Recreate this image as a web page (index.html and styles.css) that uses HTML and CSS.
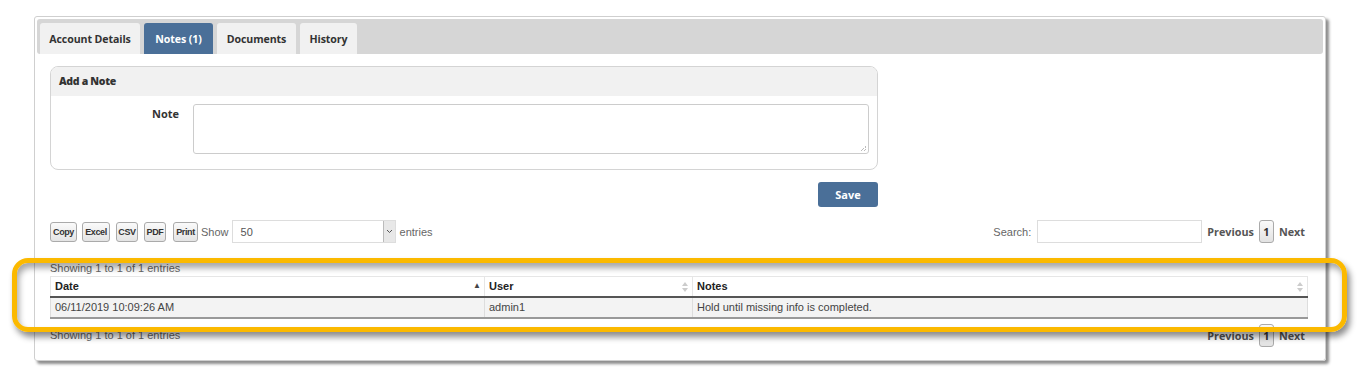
FILE: index.html
```html
<!DOCTYPE html>
<html lang="en">
<head>
  <meta charset="UTF-8" />
  <title>Account Notes</title>
  <link rel="stylesheet" href="styles.css">
</head>
<body>
  <div class="panel">
    <div class="tab-bar">
      <div class="tab w-details">Account Details</div>
      <div class="tab w-notes active">Notes (1)</div>
      <div class="tab w-docs">Documents</div>
      <div class="tab w-history">History</div>
    </div>

    <div class="content">
      <div class="note-box">
        <div class="note-head">Add a Note</div>
        <div class="note-body">
          <label class="note-label">Note</label>
          <div class="note-input"><span class="grip"></span></div>
        </div>
      </div>

      <div class="save-row">
        <button class="save">Save</button>
      </div>

      <div class="toolbar">
        <div class="tools-left">
          <button class="tool w-copy">Copy</button>
          <button class="tool w-excel">Excel</button>
          <button class="tool w-csv">CSV</button>
          <button class="tool w-pdf">PDF</button>
          <button class="tool w-print">Print</button>
          <span class="muted">Show</span>
          <div class="select">
            <span class="select-val">50</span>
            <span class="select-arrow">
              <svg width="7" height="5" viewBox="0 0 7 5"><path d="M1 1 L3.5 3.5 L6 1" fill="none" stroke="#555" stroke-width="1"/></svg>
            </span>
          </div>
          <span class="muted">entries</span>
        </div>
        <div class="tools-right">
          <span class="muted">Search:</span>
          <div class="search"></div>
          <div class="pager">
            <span>Previous</span>
            <span class="page">1</span>
            <span>Next</span>
          </div>
        </div>
      </div>

      <div class="info">Showing 1 to 1 of 1 entries</div>

      <table class="grid">
        <thead>
          <tr>
            <th class="c-date">Date<span class="sort up">&#9650;</span></th>
            <th class="c-user">User<span class="sort both"><svg width="6" height="10" viewBox="0 0 6 10"><path d="M3 0 L6 4 L0 4 Z M3 10 L6 6 L0 6 Z" fill="#ccc"/></svg></span></th>
            <th class="c-notes">Notes<span class="sort both"><svg width="6" height="10" viewBox="0 0 6 10"><path d="M3 0 L6 4 L0 4 Z M3 10 L6 6 L0 6 Z" fill="#ccc"/></svg></span></th>
          </tr>
        </thead>
        <tbody>
          <tr>
            <td>06/11/2019 10:09:26 AM</td>
            <td>admin1</td>
            <td>Hold until missing info is completed.</td>
          </tr>
        </tbody>
      </table>

      <div class="footer-row">
        <div class="info">Showing 1 to 1 of 1 entries</div>
        <div class="pager">
          <span>Previous</span>
          <span class="page">1</span>
          <span>Next</span>
        </div>
      </div>
    </div>
  </div>

  <div class="highlight"></div>
</body>
</html>
```

FILE: styles.css
```css
* {
  box-sizing: border-box;
}

body {
  margin: 0;
  background: #fff;
  font-family: "Liberation Sans", Arial, sans-serif;
  font-size: 11px;
  color: #333;
  position: relative;
  height: 383px;
  overflow: hidden;
}

.panel {
  margin: 16px 0 0 34px;
  width: 1292px;
  height: 345px;
  border: 1px solid #cfcfcf;
  border-radius: 3px;
  padding: 2px;
  box-shadow: 3px 3px 3px rgba(0, 0, 0, 0.45);
}

.tab-bar {
  display: flex;
  gap: 4px;
  height: 35px;
  padding: 4px 0 0 3px;
  background: #d6d6d6;
  border-radius: 3px;
}

.tab {
  display: flex;
  align-items: center;
  justify-content: center;
  height: 31px;
  background: #f1f1f1;
  border-radius: 3px 3px 0 0;
  font-family: "Open Sans", sans-serif;
  font-weight: 700;
  font-size: 10.6px;
  letter-spacing: -0.1px;
  color: #333;
}

.w-details { width: 100px; }
.w-notes { width: 69px; }
.w-docs { width: 79px; }
.w-history { width: 57px; }

.tab.active {
  background: #4a6f98;
  color: #fff;
}

.content {
  padding: 12px 17px 0 13px;
}

.note-box {
  width: 828px;
  height: 104px;
  border: 1px solid #d4d4d4;
  border-radius: 8px;
  overflow: hidden;
}

.note-head {
  height: 29px;
  background: #f1f1f1;
  padding: 7px 0 0 8px;
  font-family: "Open Sans", sans-serif;
  font-weight: 800;
  font-size: 10.5px;
  letter-spacing: -0.3px;
  color: #333;
}

.note-body {
  display: flex;
  padding-top: 8px;
}

.note-label {
  width: 128px;
  text-align: right;
  padding-top: 2px;
  font-family: "Open Sans", sans-serif;
  font-weight: 700;
  font-size: 11px;
  color: #333;
}

.note-input {
  position: relative;
  margin-left: 14px;
  width: 676px;
  height: 50px;
  border: 1px solid #ccc;
  border-radius: 3px;
}

.grip {
  position: absolute;
  right: 2px;
  bottom: 2px;
  width: 5px;
  height: 5px;
  background: linear-gradient(135deg, transparent 50%, #bbb 50%, #bbb 60%, transparent 60%, transparent 75%, #bbb 75%, #bbb 85%, transparent 85%);
}

.save-row {
  width: 828px;
  display: flex;
  justify-content: flex-end;
  padding-top: 12px;
}

.save {
  width: 60px;
  height: 25px;
  border: none;
  border-radius: 3px;
  background: #4a6f98;
  color: #fff;
  font-family: "Open Sans", sans-serif;
  font-weight: 700;
  font-size: 11px;
  padding: 0;
}

.toolbar {
  display: flex;
  justify-content: space-between;
  align-items: center;
  margin-top: 13px;
  width: 1255px;
}

.tools-left,
.tools-right {
  display: flex;
  align-items: center;
}

.tool {
  height: 20px;
  margin-right: 6px;
  padding: 0;
  border: 1px solid #aaa;
  border-radius: 3px;
  background: linear-gradient(#fafafa, #e4e4e4);
  font-family: "Liberation Sans", Arial, sans-serif;
  font-weight: 700;
  font-size: 9px;
  letter-spacing: -0.4px;
  color: #333;
}

.w-copy { width: 27px; margin-right: 5px; }
.w-excel { width: 28px; }
.w-csv { width: 22px; }
.w-pdf { width: 22px; margin-right: 7px; }
.w-print { width: 25px; margin-right: 3px; }

.muted {
  color: #666;
  font-size: 11px;
}

.select {
  display: flex;
  align-items: center;
  justify-content: space-between;
  margin: 0 4px 0 3px;
  width: 164px;
  height: 23px;
  border: 1px solid #ddd;
  font-size: 11px;
  color: #555;
}

.select-val {
  padding-left: 8px;
}

.select-arrow {
  display: flex;
  align-items: center;
  justify-content: center;
  width: 12px;
  height: 21px;
  background: #e8e8e8;
  border-left: 1px solid #bbb;
}

.search {
  width: 165px;
  height: 23px;
  margin: 0 5px 0 6px;
  border: 1px solid #ddd;
}

.pager {
  display: flex;
  align-items: center;
  gap: 5px;
  font-family: "Open Sans", sans-serif;
  font-weight: 700;
  font-size: 10.8px;
  color: #555;
}

.page {
  display: flex;
  align-items: center;
  justify-content: center;
  width: 15px;
  height: 23px;
  border: 1px solid #aaa;
  border-radius: 3px;
  background: linear-gradient(#fafafa, #e2e2e2);
  color: #333;
}

.info {
  margin-top: 19px;
  color: #666;
  font-size: 11px;
}

.grid {
  margin-top: 2px;
  width: 1258px;
  border-collapse: collapse;
  font-size: 11px;
}

.grid th {
  position: relative;
  height: 20px;
  padding: 0 4px;
  text-align: left;
  font-weight: 700;
  color: #222;
  border-top: 1px solid #e6e6e6;
  border-left: 1px solid #e6e6e6;
  border-right: 1px solid #e6e6e6;
  border-bottom: 2px solid #555;
  background: #fff;
}

.grid td {
  height: 21px;
  padding: 0 4px;
  color: #444;
  background: #f3f3f3;
  border-left: 1px solid #ddd;
  border-right: 1px solid #ddd;
  border-bottom: 2px solid #999;
}

.c-date { width: 434px; }
.c-user { width: 208px; }

.sort {
  position: absolute;
  right: 4px;
  top: 5px;
  line-height: 1;
}

.sort.up {
  font-size: 8px;
  color: #444;
  top: 5px;
  right: 3px;
}

.footer-row {
  display: flex;
  justify-content: space-between;
  align-items: center;
  width: 1255px;
  margin-top: 5px;
}

.footer-row .info {
  margin-top: 0;
}

.highlight {
  position: absolute;
  left: 12px;
  top: 258px;
  width: 1335px;
  height: 74px;
  border: 5px solid #fbb900;
  border-radius: 16px;
  box-shadow: 3px 5px 6px rgba(0, 0, 0, 0.45), inset 2px 5px 6px rgba(0, 0, 0, 0.35);
}
```
